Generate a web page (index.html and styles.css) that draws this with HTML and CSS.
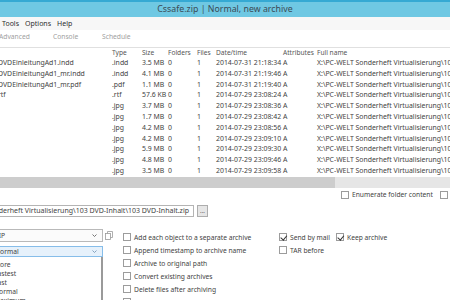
FILE: index.html
```html
<!DOCTYPE html>
<html lang="en">
  <head>
    <meta charset="UTF-8" />
    <title>Cssafe.zip | Normal, new archive</title>
    <link rel="stylesheet" href="styles.css">
  </head>
  <body>
    <div class="titlebar">Cssafe.zip | Normal, new archive</div>

    <div class="menubar">
      <span>Tools</span>
      <span>Options</span>
      <span>Help</span>
    </div>

    <div class="tabs">
      <span class="tab">Advanced</span>
      <span class="tab">Console</span>
      <span class="tab">Schedule</span>
    </div>

    <div class="list">
      <div class="row head">
        <span class="name"></span><span>Type</span><span>Size</span><span>Folders</span><span>Files</span><span>Date/time</span><span>Attributes</span><span>Full name</span>
      </div>
      <div class="row"><span class="name">DVDEinleitungAd1.indd</span><span>.indd</span><span>3.5 MB</span><span>0</span><span>1</span><span>2014-07-31 21:18:34</span><span>A</span><span>X:\PC-WELT Sonderheft Virtualisierung\103 DVD-Inhalt\</span></div>
      <div class="row"><span class="name">DVDEinleitungAd1_mr.indd</span><span>.indd</span><span>4.1 MB</span><span>0</span><span>1</span><span>2014-07-31 21:19:46</span><span>A</span><span>X:\PC-WELT Sonderheft Virtualisierung\103 DVD-Inhalt\</span></div>
      <div class="row"><span class="name">DVDEinleitungAd1_mr.pdf</span><span>.pdf</span><span>1.1 MB</span><span>0</span><span>1</span><span>2014-07-31 21:19:40</span><span>A</span><span>X:\PC-WELT Sonderheft Virtualisierung\103 DVD-Inhalt\</span></div>
      <div class="row"><span class="name">rtf</span><span>.rtf</span><span>57.6 KB</span><span>0</span><span>1</span><span>2014-07-29 23:08:24</span><span>A</span><span>X:\PC-WELT Sonderheft Virtualisierung\103 DVD-Inhalt\</span></div>
      <div class="row"><span class="name"></span><span>.jpg</span><span>3.7 MB</span><span>0</span><span>1</span><span>2014-07-29 23:08:36</span><span>A</span><span>X:\PC-WELT Sonderheft Virtualisierung\103 DVD-Inhalt\</span></div>
      <div class="row"><span class="name"></span><span>.jpg</span><span>1.7 MB</span><span>0</span><span>1</span><span>2014-07-29 23:08:42</span><span>A</span><span>X:\PC-WELT Sonderheft Virtualisierung\103 DVD-Inhalt\</span></div>
      <div class="row"><span class="name"></span><span>.jpg</span><span>4.2 MB</span><span>0</span><span>1</span><span>2014-07-29 23:08:56</span><span>A</span><span>X:\PC-WELT Sonderheft Virtualisierung\103 DVD-Inhalt\</span></div>
      <div class="row"><span class="name"></span><span>.jpg</span><span>4.2 MB</span><span>0</span><span>1</span><span>2014-07-29 23:09:10</span><span>A</span><span>X:\PC-WELT Sonderheft Virtualisierung\103 DVD-Inhalt\</span></div>
      <div class="row"><span class="name"></span><span>.jpg</span><span>5.9 MB</span><span>0</span><span>1</span><span>2014-07-29 23:09:30</span><span>A</span><span>X:\PC-WELT Sonderheft Virtualisierung\103 DVD-Inhalt\</span></div>
      <div class="row"><span class="name"></span><span>.jpg</span><span>4.8 MB</span><span>0</span><span>1</span><span>2014-07-29 23:09:46</span><span>A</span><span>X:\PC-WELT Sonderheft Virtualisierung\103 DVD-Inhalt\</span></div>
      <div class="row"><span class="name"></span><span>.jpg</span><span>3.5 MB</span><span>0</span><span>1</span><span>2014-07-29 23:09:58</span><span>A</span><span>X:\PC-WELT Sonderheft Virtualisierung\103 DVD-Inhalt\</span></div>
    </div>

    <div class="hscroll"><div class="thumb"></div></div>

    <div class="opts">
      <label class="check"><span class="box"></span>Enumerate folder content</label>
      <label class="check"><span class="box"></span>Show hidden files</label>
    </div>

    <div class="pathrow">
      <div class="path"><span>X:\PC-WELT Sonderheft Virtualisierung\103 DVD-Inhalt\103 DVD-Inhalt.zip</span></div>
      <button class="browse">...</button>
    </div>

    <div class="bottom">
      <div class="left">
        <div class="select">
          <span>ZIP</span>
          <svg class="arrow" width="5" height="3" viewBox="0 0 5 3"><polyline points="0.5,0.5 2.5,2.5 4.5,0.5" fill="none" stroke="#666" stroke-width="0.9"/></svg>
        </div>
        <div class="select open">
          <span>Normal</span>
          <svg class="arrow" width="5" height="3" viewBox="0 0 5 3"><polyline points="0.5,0.5 2.5,2.5 4.5,0.5" fill="none" stroke="#7a9ab8" stroke-width="0.9"/></svg>
        </div>
        <div class="droplist">
          <div>Store</div>
          <div>Fastest</div>
          <div>Fast</div>
          <div>Normal</div>
          <div>Maximum</div>
        </div>
      </div>

      <div class="preset">
        <svg width="8" height="9" viewBox="0 0 8 9">
          <rect x="0.5" y="2.5" width="5" height="6" fill="#fff" stroke="#9a9a9a" stroke-width="0.8"/>
          <path d="M2.5 2.5 V0.5 H7.5 V6.5 H5.5" fill="none" stroke="#9a9a9a" stroke-width="0.8"/>
        </svg>
      </div>

      <div class="checks">
        <label class="check"><span class="box"></span>Add each object to a separate archive</label>
        <label class="check"><span class="box"></span>Append timestamp to archive name</label>
        <label class="check"><span class="box"></span>Archive to original path</label>
        <label class="check"><span class="box"></span>Convert existing archives</label>
        <label class="check"><span class="box"></span>Delete files after archiving</label>
        <label class="check"><span class="box"></span>Freeze archive (read only)</label>
      </div>

      <div class="checks">
        <div class="pair">
          <label class="check"><span class="box on"></span>Send by mail</label>
          <label class="check"><span class="box on"></span>Keep archive</label>
        </div>
        <label class="check"><span class="box"></span>TAR before</label>
      </div>
    </div>
  </body>
</html>
```

FILE: styles.css
```css
* {
  box-sizing: border-box;
}
body {
  margin: 0;
  width: 450px;
  height: 300px;
  overflow: hidden;
  background: #fff;
  font-family: "Noto Sans", "Open Sans", sans-serif;
  font-size: 6.7px;
  color: #3f3f3f;
}

.titlebar {
  height: 17px;
  background: #6fc8e3;
  border-top: 2px solid #35a9d3;
  text-align: center;
  font-size: 8.8px;
  line-height: 14px;
  color: #3b4a55;
}

.menubar {
  height: 13px;
  background: #f7f7f7;
  display: flex;
  gap: 6px;
  align-items: center;
  padding-left: 2px;
  font-size: 7px;
  color: #2e2e2e;
}

.tabs {
  height: 12px;
  display: flex;
  align-items: center;
  margin-left: -1px;
  color: #a0a0a0;
}
.tab {
  width: 54px;
}
.tab:nth-child(2) {
  width: 49px;
}

.list {
  margin-top: 5px;
  border-top: 1px solid #e0e0e0;
}
.row {
  display: grid;
  grid-template-columns: 112px 30px 26px 29px 19px 67px 34px 1fr;
  height: 10.8px;
  line-height: 10.8px;
  white-space: nowrap;
  font-size: 6.9px;
}
.row.head {
  height: 10px;
  line-height: 10px;
  font-size: 6.6px;
  color: #555;
}
.name {
  margin-left: -2px;
}

.hscroll {
  height: 11px;
  background: #e6e6e6;
}
.thumb {
  width: 335px;
  height: 100%;
  background: #cdcdcd;
}

.opts {
  height: 14px;
  display: flex;
  align-items: center;
  gap: 7px;
  padding-left: 341px;
  white-space: nowrap;
}

.check {
  display: flex;
  align-items: center;
  gap: 3px;
  white-space: nowrap;
}
.box {
  width: 8px;
  height: 8px;
  flex: none;
  border: 1px solid #9c9c9c;
  background: #fff;
  position: relative;
}
.box.on::after {
  content: "";
  position: absolute;
  left: 1.5px;
  top: 0px;
  width: 2.5px;
  height: 4.5px;
  border: solid #333;
  border-width: 0 1.3px 1.3px 0;
  transform: rotate(40deg);
}

.pathrow {
  margin-top: 3px;
  display: flex;
  gap: 3px;
  height: 12px;
}
.path {
  width: 195px;
  margin-left: -1px;
  border: 1px solid #b4b4b4;
  display: flex;
  justify-content: flex-end;
  align-items: center;
  overflow: hidden;
  white-space: nowrap;
  padding-right: 4px;
  font-size: 7px;
}
.browse {
  width: 11px;
  height: 12px;
  padding: 0;
  border: 1px solid #adadad;
  background: #e6e6e6;
  font-family: inherit;
  font-size: 6px;
  line-height: 6px;
  color: #333;
}

.bottom {
  margin-top: 11px;
  display: grid;
  grid-template-columns: 111px 20px 156px auto;
  margin-left: -8px;
}

.left {
  display: flex;
  flex-direction: column;
  padding-top: 1px;
}
.select {
  height: 13px;
  border: 1px solid #b9b9b9;
  background: #fbfbfb;
  display: flex;
  align-items: center;
  justify-content: space-between;
  padding: 0 5px 0 2px;
}
.select.open {
  margin-top: 4px;
  height: 11px;
  border-color: #86bde9;
  background: #e6f1fb;
}
.droplist {
  height: 60px;
  border: 1px solid #9a9a9a;
  border-top: none;
  border-right-width: 2px;
  background: #fff;
  padding: 3px 3px 0 1px;
  line-height: 9px;
}

.preset {
  padding: 3px 0 0 2px;
}

.checks {
  display: flex;
  flex-direction: column;
  padding-top: 3px;
}
.checks .check {
  height: 13px;
}
.pair {
  display: flex;
  gap: 6px;
}
```
